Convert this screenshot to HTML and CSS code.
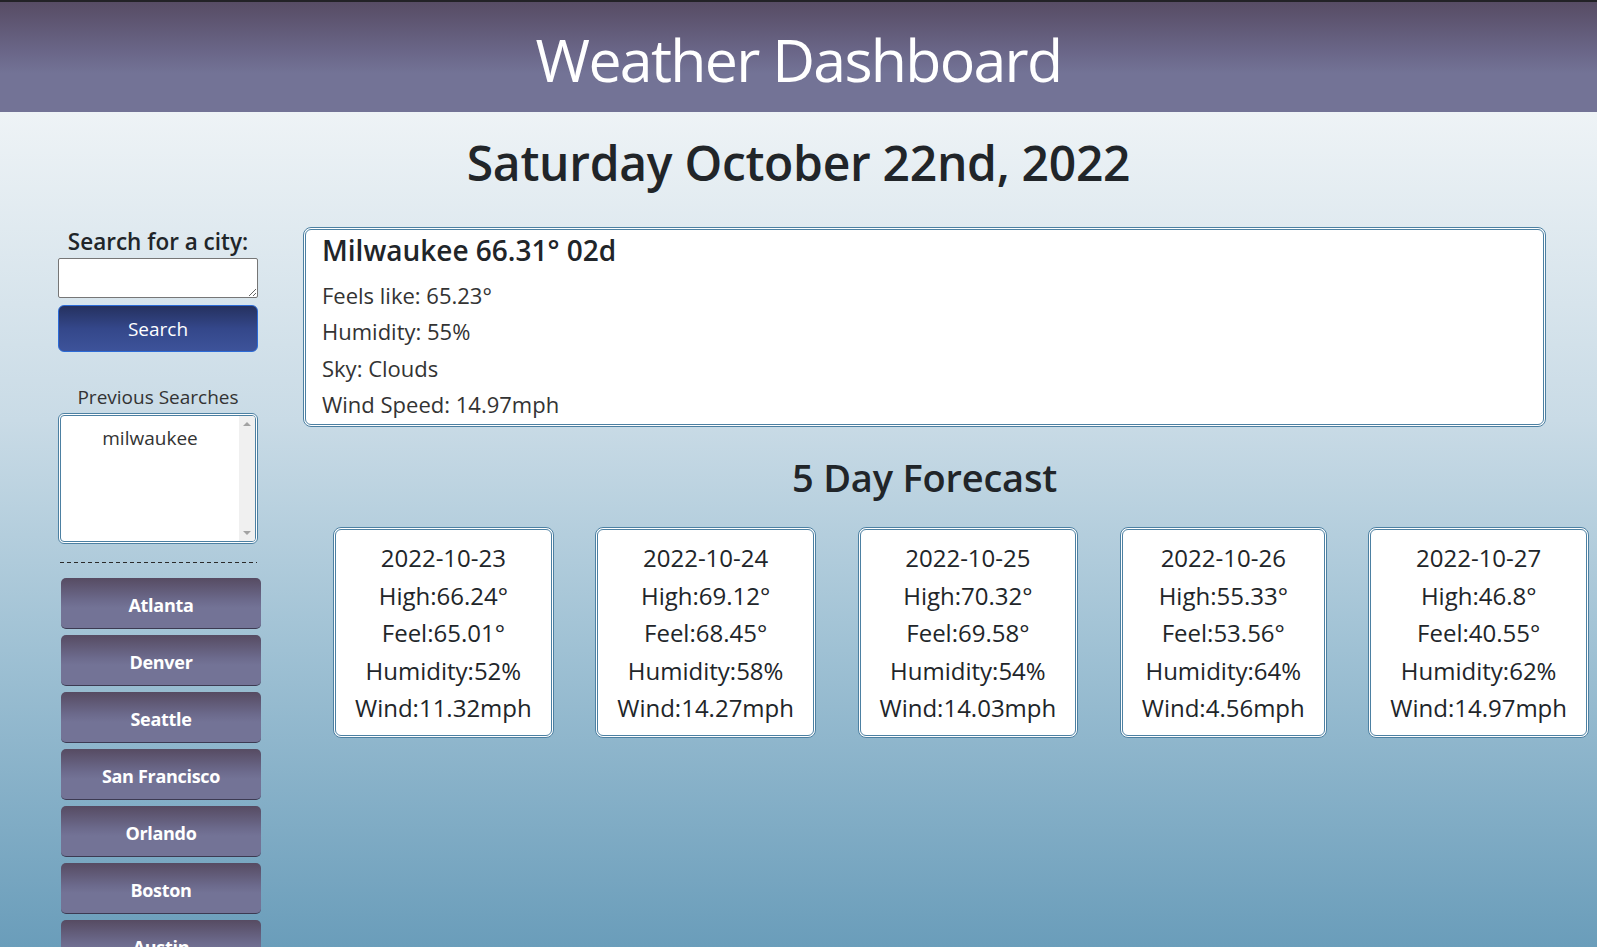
FILE: index.html
```html
<!DOCTYPE html>
<html lang="en">
<head>
<meta charset="utf-8">
<title>Weather Dashboard</title>
<link rel="stylesheet" href="styles.css">
</head>
<body>
<header class="topbar">
  <h1 class="topbar-title">Weather Dashboard</h1>
</header>
<h2 class="today">Saturday October 22nd, 2022</h2>
<div class="layout">
  <aside class="sidebar">
    <label class="search-label" for="city">Search for a city:</label>
    <textarea id="city" class="search-input"></textarea>
    <button class="search-btn" type="button">Search</button>
    <div class="prev-title">Previous Searches</div>
    <div class="prev-list">
      <div class="prev-items">
        <div class="prev-item">milwaukee</div>
      </div>
      <div class="prev-scroll">
        <span class="arrow-up"></span>
        <span class="arrow-down"></span>
      </div>
    </div>
    <div class="divider"></div>
    <div class="city-list">
      <button class="city-btn" type="button">Atlanta</button>
      <button class="city-btn" type="button">Denver</button>
      <button class="city-btn" type="button">Seattle</button>
      <button class="city-btn" type="button">San Francisco</button>
      <button class="city-btn" type="button">Orlando</button>
      <button class="city-btn" type="button">Boston</button>
      <button class="city-btn" type="button">Austin</button>
      <button class="city-btn" type="button">Chicago</button>
    </div>
  </aside>
  <main class="content">
    <section class="current">
      <h3 class="current-title">Milwaukee 66.31° 02d</h3>
      <p class="current-line">Feels like: 65.23°</p>
      <p class="current-line">Humidity: 55%</p>
      <p class="current-line">Sky: Clouds</p>
      <p class="current-line">Wind Speed: 14.97mph</p>
    </section>
    <h2 class="forecast-title">5 Day Forecast</h2>
    <div class="forecast-row">
      <div class="day-card">
        <div>2022-10-23</div><div>High:66.24°</div><div>Feel:65.01°</div><div>Humidity:52%</div><div>Wind:11.32mph</div>
      </div>
      <div class="day-card">
        <div>2022-10-24</div><div>High:69.12°</div><div>Feel:68.45°</div><div>Humidity:58%</div><div>Wind:14.27mph</div>
      </div>
      <div class="day-card">
        <div>2022-10-25</div><div>High:70.32°</div><div>Feel:69.58°</div><div>Humidity:54%</div><div>Wind:14.03mph</div>
      </div>
      <div class="day-card">
        <div>2022-10-26</div><div>High:55.33°</div><div>Feel:53.56°</div><div>Humidity:64%</div><div>Wind:4.56mph</div>
      </div>
      <div class="day-card">
        <div>2022-10-27</div><div>High:46.8°</div><div>Feel:40.55°</div><div>Humidity:62%</div><div>Wind:14.97mph</div>
      </div>
    </div>
  </main>
</div>
</body>
</html>
```

FILE: styles.css
```css
* { box-sizing: border-box; }

html, body {
  margin: 0;
  padding: 0;
}

body {
  font-family: "Open Sans", "Noto Sans", sans-serif;
  color: #212529;
  background: linear-gradient(to bottom, #eef3f6 0px, #eef3f6 112px, #c9dbe6 420px, #9fc1d4 650px, #6a9dba 947px) fixed;
  overflow: hidden;
  height: 947px;
}

.topbar {
  height: 112px;
  border-top: 2px solid #222226;
  background: linear-gradient(to bottom, #574c64 0%, #6a6688 45%, #737396 65%, #737396 100%);
  text-align: center;
}

.topbar-title {
  margin: 0;
  padding-top: 4px;
  font-size: 59px;
  font-weight: 400;
  letter-spacing: -1.7px;
  line-height: 106px;
  color: #ffffff;
}

.today {
  margin: 22px 0 0;
  font-size: 48px;
  line-height: 58px;
  font-weight: 600;
  letter-spacing: -0.3px;
  text-align: center;
}

.layout {
  display: flex;
  align-items: flex-start;
  gap: 45px;
  margin-top: 35px;
  padding-left: 58px;
}

.sidebar {
  flex: 0 0 200px;
  width: 200px;
  min-width: 0;
  display: flex;
  flex-direction: column;
  align-items: flex-start;
  text-align: center;
}

.search-label {
  display: block;
  width: 200px;
  font-size: 22.5px;
  line-height: 29px;
  font-weight: 600;
}

.search-input {
  display: block;
  margin-top: 2px;
  width: 200px;
  height: 40px;
  border: 1px solid #767676;
  border-radius: 2px;
  background: #fff;
  resize: both;
}

.search-btn {
  margin-top: 7px;
  width: 200px;
  height: 47px;
  border: 1px solid #2c6bd6;
  border-radius: 6px;
  background: linear-gradient(to bottom, #25315f 0%, #34478a 50%, #3d539a 100%);
  color: #fff;
  font-family: inherit;
  font-size: 19px;
}

.prev-title {
  width: 200px;
  margin-top: 34px;
  font-size: 19px;
  line-height: 23px;
  color: #333;
}

.prev-list {
  margin-top: 4px;
  width: 200px;
  height: 131px;
  display: flex;
  border: 3px double #4c80a2;
  border-radius: 6px;
  background: #fff;
  overflow: hidden;
}

.prev-items {
  flex: 1 1 auto;
}

.prev-item {
  padding-top: 9px;
  font-size: 19px;
  line-height: 26px;
  color: #333;
}

.prev-scroll {
  flex: 0 0 16px;
  display: flex;
  flex-direction: column;
  justify-content: space-between;
  align-items: center;
  padding: 6px 0 6px;
  background: #f0f0f0;
}

.arrow-up,
.arrow-down {
  width: 0;
  height: 0;
  border-left: 4px solid transparent;
  border-right: 4px solid transparent;
}

.arrow-up {
  border-bottom: 4px solid #a3a3a3;
}

.arrow-down {
  border-top: 4px solid #a3a3a3;
}

.divider {
  margin: 18px 0 0 2px;
  width: 197px;
  height: 1px;
  background: repeating-linear-gradient(to right, #2a2a2a 0 4px, transparent 4px 7px);
}

.city-list {
  margin-top: 15px;
  margin-left: 3px;
  display: flex;
  flex-direction: column;
  gap: 6px;
}

.city-btn {
  width: 200px;
  height: 51px;
  padding: 3px 0 0;
  border: 0;
  border-bottom: 1px solid #3c3a52;
  border-radius: 5px;
  background: linear-gradient(to bottom, #564b62 0%, #6c6a8c 45%, #737396 60%, #737396 100%);
  color: #fff;
  font-family: inherit;
  font-size: 18px;
  letter-spacing: -0.3px;
  font-weight: 700;
}

.content {
  flex: 0 0 1243px;
  min-width: 0;
}

.current {
  height: 200px;
  padding: 3px 16px;
  border: 3px double #4c80a2;
  border-radius: 8px;
  background: #fff;
}

.current-title {
  margin: 0 0 10px;
  font-size: 28px;
  line-height: 34px;
  font-weight: 600;
}

.current-line {
  margin: 0;
  font-size: 22px;
  line-height: 36.33px;
  color: #333;
}

.forecast-title {
  margin: 27px 0 0;
  font-size: 38px;
  line-height: 46px;
  font-weight: 600;
  letter-spacing: -0.2px;
  text-align: center;
}

.forecast-row {
  margin-top: 27px;
  padding-left: 30px;
  display: flex;
  gap: 41.5px;
  align-items: flex-start;
}

.day-card {
  flex: 0 0 auto;
  padding: 9px 19px 8.5px;
  border: 3px double #4c80a2;
  border-radius: 8px;
  background: #fff;
  text-align: center;
  font-size: 24px;
  line-height: 37.5px;
  font-weight: 500;
  white-space: nowrap;
}
```
